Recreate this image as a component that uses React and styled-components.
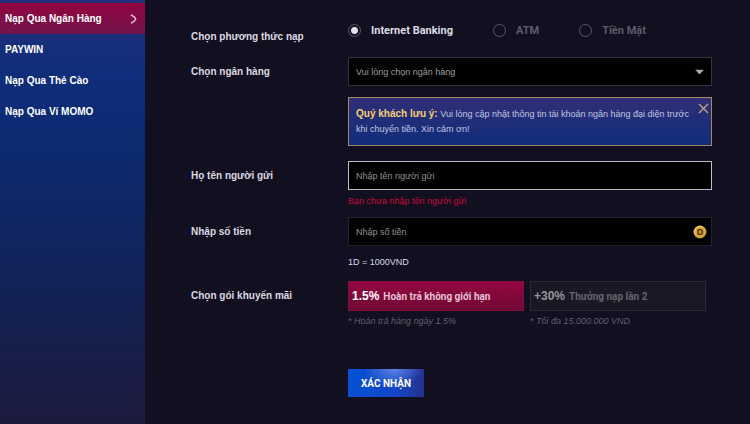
import React, { useState } from "react";
import styled, { createGlobalStyle } from "styled-components";

const GlobalStyle = createGlobalStyle`
  * {
    box-sizing: border-box;
  }
  body {
    margin: 0;
    background: #110f20;
    color: #dcd9e2;
    font-family: "Liberation Sans", Arial, sans-serif;
    font-size: 10px;
  }
  button, input, select {
    font-family: inherit;
    margin: 0;
  }
`;

const Page = styled.div`
  display: grid;
  grid-template-columns: 145px 1fr;
  min-height: 100vh;
`;

const Sidebar = styled.nav`
  padding-top: 3px;
  background: linear-gradient(180deg, #21307c 0%, #0f2d7a 18%, #0c2a71 35%, #14204f 76%, #1c1a3e 100%);
`;

const MenuLink = styled.a`
  display: flex;
  align-items: center;
  justify-content: space-between;
  height: 31px;
  padding: 0 8px 0 5px;
  color: #fff;
  font-weight: 700;
  text-decoration: none;
  background: ${({ $active }) =>
    $active ? "linear-gradient(180deg, #92033f, #70164b)" : "transparent"};
`;

const Form = styled.form`
  padding: 22px 38px 24px 46px;
`;

const Row = styled.div`
  display: grid;
  grid-template-columns: 157px minmax(0, 1fr);
  margin-bottom: ${({ $gap }) => $gap}px;
`;

const Label = styled.label`
  line-height: 29px;
  font-weight: 700;
`;

const RadioGroup = styled.div`
  display: flex;
  gap: 40px;
  height: 16px;
`;

const RadioLabel = styled.label`
  display: flex;
  align-items: center;
  gap: 10px;
  font-family: Roboto, sans-serif;
  font-size: 11px;
  font-weight: 700;
  color: ${({ $checked }) => ($checked ? "#dddbe4" : "#5f5c69")};
`;

const Radio = styled.input`
  appearance: none;
  width: 13px;
  height: 13px;
  border: 1px solid #5c5a68;
  border-radius: 50%;
  &:checked {
    background: radial-gradient(circle, #e4e2ea 3px, transparent 4px);
  }
`;

const Field = styled.div`
  position: relative;
  height: 29px;
  svg {
    position: absolute;
    top: 50%;
    right: ${({ $right }) => $right}px;
    transform: translateY(-50%);
    pointer-events: none;
  }
`;

const fieldLook = `
  display: block;
  width: 100%;
  height: 29px;
  padding: 0 7px;
  background: #000;
  border-radius: 0;
  outline: none;
  font-size: 9px;
`;

const Select = styled.select`
  ${fieldLook}
  appearance: none;
  border: 1px solid #34323f;
  color: #9d9ba0;
`;

const Input = styled.input`
  ${fieldLook}
  border: 1px solid ${({ $invalid }) => ($invalid ? "#bdbac4" : "#24222d")};
  color: #ddd;
  &::placeholder {
    color: #928f95;
    opacity: 1;
  }
`;

const Alert = styled.div`
  position: relative;
  height: 49px;
  margin-top: 11px;
  padding: 8px 18px 8px 7px;
  border: 1px solid #a18a63;
  background: linear-gradient(180deg, #302f76, #102c7b);
  color: #c0c5e0;
  font-size: 9px;
  line-height: 15px;
  strong {
    color: #f7cf75;
    font-size: 10px;
  }
`;

const Close = styled.button`
  position: absolute;
  top: 5px;
  right: 2px;
  display: flex;
  padding: 0;
  border: none;
  background: none;
  color: #c8ab83;
`;

const ErrorText = styled.p`
  margin: 3px 0 0;
  color: #c80a33;
  font-size: 9px;
  line-height: 16px;
`;

const Hint = styled.p`
  margin: 8px 0 0;
  font-size: 9px;
  line-height: 16px;
`;

const Promos = styled.div`
  display: grid;
  grid-template-columns: 1fr 1fr;
  gap: 6px;
  padding-right: 6px;
`;

const Promo = styled.button`
  display: flex;
  align-items: center;
  gap: 4px;
  width: 100%;
  height: 30px;
  padding: 0 3px;
  border: 1px solid ${({ $active }) => ($active ? "#850b40" : "#2b2834")};
  background: ${({ $active }) =>
    $active ? "linear-gradient(180deg, #95053f, #6f0a35)" : "#1b1825"};
  color: ${({ $active }) => ($active ? "#e6c3d3" : "#67636f")};
  font-family: Roboto, sans-serif;
  font-size: 10px;
  font-weight: 700;
  white-space: nowrap;
  strong {
    color: ${({ $active }) => ($active ? "#fff" : "#96939b")};
    font-family: "Liberation Sans", Arial, sans-serif;
    font-size: 12px;
  }
`;

const Note = styled.p`
  margin: 2px 0 0;
  color: #625f6c;
  font-size: 9px;
  font-style: italic;
  line-height: 16px;
`;

const Submit = styled.button`
  grid-column: 2;
  justify-self: start;
  width: 76px;
  height: 28px;
  padding: 0;
  border: none;
  background:
    radial-gradient(ellipse at 60% 0%, #5d82e2 0%, transparent 45%),
    linear-gradient(90deg, #0551d5, #1446c6 60%, #23328f);
  color: #fff;
  font-family: Roboto, sans-serif;
  font-size: 10px;
  font-weight: 700;
`;

const menu = ["Nạp Qua Ngân Hàng", "PAYWIN", "Nạp Qua Thẻ Cào", "Nạp Qua Ví MOMO"];
const methods = ["Internet Banking", "ATM", "Tiền Mặt"];
const promos = [
  { rate: "1.5%", title: "Hoàn trả không giới hạn", note: "* Hoàn trả hàng ngày 1.5%" },
  { rate: "+30%", title: "Thưởng nạp lần 2", note: "* Tối đa 15.000.000 VND" },
];

const Chevron = () => (
  <svg width="7" height="10" viewBox="0 0 7 10" fill="none" stroke="#e3b3cb" strokeWidth="1.6">
    <path d="M1 0.7C2.8 1.8 5.6 3.8 5.6 5S2.8 8.2 1 9.3" />
  </svg>
);

const Coin = () => (
  <svg width="14" height="14" viewBox="0 0 14 14">
    <defs>
      <linearGradient id="coin" x1="0" y1="0" x2="1" y2="1">
        <stop offset="0" stopColor="#f6d679" />
        <stop offset="1" stopColor="#b77c18" />
      </linearGradient>
    </defs>
    <circle cx="7" cy="7" r="6.5" fill="url(#coin)" />
    <circle cx="7" cy="7" r="4.8" fill="#d49d2a" stroke="#edc65c" strokeWidth=".5" />
    <path d="M5.2 4.6H7Q9.4 4.6 9.4 7T7 9.4H5.2Z" fill="none" stroke="#54380a" strokeWidth="1.4" />
  </svg>
);

const App = () => {
  const [method, setMethod] = useState(0);
  const [promo, setPromo] = useState(0);
  const [notice, setNotice] = useState(true);

  return (
    <>
      <GlobalStyle />
      <Page>
        <Sidebar>
          {menu.map((item, i) => (
            <MenuLink href="#" key={item} $active={i === 0}>
              {item}
              {i === 0 && <Chevron />}
            </MenuLink>
          ))}
        </Sidebar>
        <Form onSubmit={(e) => e.preventDefault()}>
          <Row $gap={6}>
            <Label as="span" id="method">Chọn phương thức nạp</Label>
            <RadioGroup role="radiogroup" aria-labelledby="method">
              {methods.map((item, i) => (
                <RadioLabel key={item} $checked={method === i}>
                  <Radio
                    type="radio"
                    name="method"
                    checked={method === i}
                    onChange={() => setMethod(i)}
                  />
                  {item}
                </RadioLabel>
              ))}
            </RadioGroup>
          </Row>
          <Row $gap={15}>
            <Label htmlFor="bank">Chọn ngân hàng</Label>
            <div>
              <Field $right={8}>
                <Select id="bank">
                  <option>Vui lòng chọn ngân hàng</option>
                </Select>
                <svg width="9" height="5" viewBox="0 0 9 5">
                  <path d="M0 0H9L4.5 5Z" fill="#aaa8ad" />
                </svg>
              </Field>
              {notice && (
                <Alert>
                  <strong>Quý khách lưu ý:</strong> Vui lòng cập nhật thông tin tài khoản ngân
                  hàng đại diện trước khi chuyển tiền. Xin cảm ơn!
                  <Close type="button" aria-label="Đóng" onClick={() => setNotice(false)}>
                    <svg width="11" height="11" viewBox="0 0 11 11" stroke="currentColor" strokeWidth="1.2">
                      <path d="M1 1L10 10M10 1L1 10" />
                    </svg>
                  </Close>
                </Alert>
              )}
            </div>
          </Row>
          <Row $gap={8}>
            <Label htmlFor="sender">Họ tên người gửi</Label>
            <div>
              <Input id="sender" placeholder="Nhập tên người gửi" $invalid autoFocus />
              <ErrorText>Bạn chưa nhập tên người gửi</ErrorText>
            </div>
          </Row>
          <Row $gap={11}>
            <Label htmlFor="amount">Nhập số tiền</Label>
            <div>
              <Field $right={5}>
                <Input id="amount" placeholder="Nhập số tiền" />
                <Coin />
              </Field>
              <Hint>1D = 1000VND</Hint>
            </div>
          </Row>
          <Row $gap={40}>
            <Label as="span">Chọn gói khuyến mãi</Label>
            <Promos>
              {promos.map((item, i) => (
                <div key={item.rate}>
                  <Promo type="button" $active={promo === i} onClick={() => setPromo(i)}>
                    <strong>{item.rate}</strong>
                    {item.title}
                  </Promo>
                  <Note>{item.note}</Note>
                </div>
              ))}
            </Promos>
          </Row>
          <Row $gap={0}>
            <Submit>XÁC NHẬN</Submit>
          </Row>
        </Form>
      </Page>
    </>
  );
};

export default App;
